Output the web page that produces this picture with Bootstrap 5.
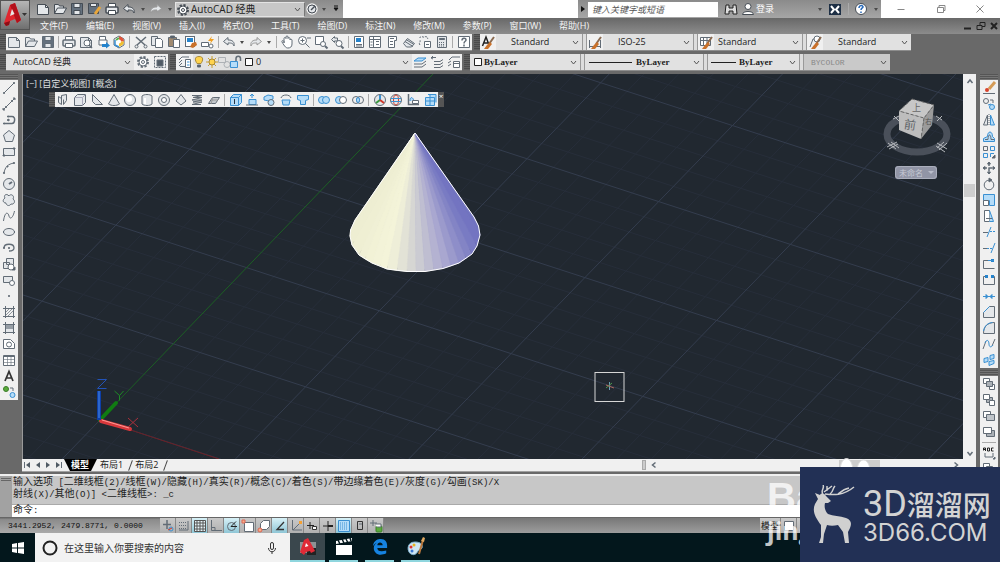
<!DOCTYPE html>
<html lang="zh-CN">
<head>
<meta charset="utf-8">
<meta name="viewport" content="width=device-width, initial-scale=1">
<title>AutoCAD 经典</title>
<link href="https://cdn.jsdelivr.net/npm/bootstrap@5.3.0/dist/css/bootstrap.min.css" rel="stylesheet">
<style>
body{height:100vh;background:#696969;font:9px/12px "Open Sans","Noto Sans CJK SC",sans-serif;color:#222;overflow:hidden}
button,.tbtn{border:0;background:none;padding:0;color:inherit;font:inherit;display:flex;align-items:center;justify-content:center;flex:1 1 0;min-width:0}
.ico{width:16px;height:16px;fill:none;stroke:#626c76;flex:none;display:block}
.ico .s{stroke:#3a90d2}.ico .l{fill:#b5dcf8}.ico .d{fill:#505a64}.ico .w{fill:#fff}
.ico .o{fill:#c9712a;stroke:none}.ico .y{fill:#ffd34d}.ico .g{fill:#5aab3c;stroke:#3c7d2a}.ico .r{stroke:#cf3a2c}
.ico .n{fill:#2583cc;stroke:none}.ico .e{fill:#e4e7ea}
.caret{flex:0 0 10px}.caret::after{content:"";border:2px solid transparent;border-top:3px solid #4a4a4a;margin-top:2px}
.vr-s{width:1px;height:12px;background:#aaa;margin:0 2px;flex:none}
.grip{width:6px;height:16px;flex:none;background:repeating-linear-gradient(#4b4b4b 0 1px,#606060 1px 2px)}
.grip2{width:5px;height:16px;flex:none;border-left:1px solid #999;border-right:1px solid #999;background:#ddd}
select{appearance:none;border:0;border-radius:0;height:16px;padding:0 12px 0 7px;color:#222;font:inherit;outline:0;min-width:0;
 background:#e1e1e1 url("data:image/svg+xml,%3Csvg xmlns='http://www.w3.org/2000/svg' width='7' height='5'%3E%3Cpath d='M1 1l2.5 3L6 1' fill='none' stroke='%23555'/%3E%3C/svg%3E") no-repeat right 3px center}
.strip{background:#f0f0f0;height:17px;border-bottom:1px solid #8d8d8d}
.titlebar{height:18px;background:linear-gradient(#8b8b8b,#a6a6a6)}
.titlebar .ico{stroke:#454c54}
.ws-title{width:130px;height:15px;padding-left:15px;background-color:#c7c7c7;border:1px solid #e3e3e3;border-right-color:#777;font-size:10px}
.logo{width:30px;height:30px;background:linear-gradient(#b5b5b5,#6f6f6f);border:1px solid #555}
.menus{height:16px;background:linear-gradient(#686868,#8c8c8c)}
.menus a{color:#f5f5f5;text-decoration:none}
.search{width:130px;height:15px;border:0;padding:0 4px;font-style:italic;font-size:9px}
.search::placeholder{color:#555}
.serif{font-family:"Liberation Serif",serif;font-weight:700}
.side{width:18px;background:#f0f0f0;flex:none}
.side button{height:16px;flex:0 0 auto;width:100%}
.side-grip{height:6px;background:repeating-linear-gradient(#555 0 1px,#747474 1px 2px);flex:none}
.view{background:#212830;border-left:1px solid #9a9a9a}
.view svg.scene{position:absolute;inset:0;width:100%;height:100%}
.palette{position:absolute;left:26px;top:18px;width:395px;height:15px;background:#f0f0f0}
.palette .x{flex:0 0 6px;background:#555;color:#fff;height:15px;font-size:8px;align-items:flex-start;line-height:7px}
.cube{position:absolute;right:9px;top:18px;width:74px;height:90px}
.vsb{width:13px;background:#f0f0f0;flex:none}
.thumb{background:#cdcdcd}
.tabs{height:13px;background:#f0f0f0;border-bottom:1px solid #a0a0a0}
.tabs .nav-b{width:11px;flex:none;border-right:1px solid #bbb;background:#f5f5f5}
.tabs a{color:#222;text-decoration:none;padding:0 7px 0 6px;position:relative}
.tabs a.on{background:#000;color:#fff;font-weight:700;clip-path:polygon(0 0,100% 0,calc(100% - 6px) 100%,6px 100%);padding:0 8px 0 7px}
.slash{width:1px;height:11px;background:#444;transform:rotate(20deg);flex:none}
.cmd{background:#c7c7c7;border-top:2px solid #efefef}
.cmd-l{width:12px;background:#a2a2a2;flex:none}
.cmd-l i{display:block;margin:2px 1px;height:3px;border:1px solid #666;border-width:1px 0}
.log{font:10px/11px "Liberation Mono","Noto Sans CJK SC",monospace;padding:1px 0 0 1px;height:28px;white-space:pre}
.log small,.entry small{font-size:9px}
.entry{background:#fff;height:13px;font:10px/13px "Liberation Mono","Noto Sans CJK SC",monospace;padding-left:1px;border-top:1px solid #aaa}
.entry input{border:0;outline:0;height:11px;padding:0}
.status{height:16px;background:linear-gradient(#777,#9d9d9d);border-top:1px solid #666}
.coords{width:160px;padding-left:8px;gap:5px;font:8px/14px "Liberation Mono",monospace;color:#111;flex:none;background:linear-gradient(#8a8a8a,#aaa)}
.status button{flex:0 0 16px;height:15px;background:linear-gradient(#c9c9c9,#b0b0b0);border-right:1px solid #888}
.status button.on{background:linear-gradient(#d8f1f7,#8fc6d6)}
.task{height:29px;background:#03171c}
.find{width:255px;background:#f2f2f2;font-size:10px}
.find input{border:0;background:none;outline:0;width:200px;padding:0;height:20px}
.find input::placeholder{color:#333}
.task .app{flex:0 0 29px;height:29px;margin-right:7px;border-bottom:2px solid #8fd6de}
.task .app.on{flex-basis:35px;background:#3a474d;margin-right:4px}
.brand-box{position:absolute;right:0;bottom:0;width:200px;height:95px;background:#223055;color:#d3d3d3;z-index:4}
.brand-deer{left:12px;top:18px;position:absolute}
.brand-a{font:500 28px/30px "Noto Sans CJK SC",sans-serif;white-space:nowrap;height:32px}
.brand-a span{font:36px/30px Roboto,sans-serif}
.brand-b{font:24px/24px Inter,sans-serif}
.ghost{position:absolute;right:180px;bottom:16px;width:53px;height:68px;color:#fff;opacity:.75;font:700 40px/38px "Liberation Sans",sans-serif;z-index:3}
.ghost div+div{font:700 25px/28px "Open Sans",sans-serif}
.paw{position:absolute;right:127px;bottom:90px;z-index:3}
.winb .ico{stroke:#888}
</style>
</head>
<body class="d-flex flex-column">
<header class="d-flex position-relative">
 <button class="logo flex-grow-0 flex-shrink-0" style="flex-basis:30px" aria-label="应用程序菜单"><svg width="28" height="28" viewBox="0 0 28 28"><path d="M3 22L9 4l5-2 6 17-4 3-2-4-5 2-1 4-3 1z" fill="#e0262f"/><path d="M9 4l5-2 6 17-4 3z" fill="#b3101b"/><path d="M9 15l2-7 2.500 5z" fill="#e8e8e8"/><path d="M3 22l2 3 3-1 1-4z" fill="#8d0c15"/><path d="M21 12h5l-2.500 3z" fill="#333"/></svg></button>
 <div class="flex-grow-1" style="min-width:0">
  <div class="d-flex titlebar align-items-center">
   <div class="d-flex align-items-center ps-1" style="width:145px" data-icons="new open save saveas print undo v redo v"></div>
   <div class="position-relative"><select class="ws-title" aria-label="工作空间"><option>AutoCAD 经典</option></select><span class="position-absolute start-0 top-0" data-ico="gear"></span></div>
   <div class="d-flex align-items-center" style="width:38px" data-icons="compass v drop"></div>
   <div class="bg-white flex-grow-1 align-self-stretch"></div>
   <div class="d-flex align-items-center" style="width:10px" data-icons="play"></div>
   <input class="search" placeholder="键入关键字或短语" aria-label="搜索">
   <div class="d-flex align-items-center ps-1" style="width:38px" data-icons="bino user"></div>
   <a href="#" class="text-white text-decoration-none" style="width:59px">登录</a>
   <div class="d-flex align-items-center" style="width:66px" data-icons="v xchg | help v"></div>
   <div class="d-flex bg-white align-self-stretch align-items-center winb" style="width:119px" data-icons="wmin wmax wx"></div>
  </div>
  <nav class="d-flex menus align-items-center">
   <div class="d-flex flex-grow-1" style="gap:18px;padding-left:10px;white-space:nowrap"><a href="#">文件(F)</a><a href="#">编辑(E)</a><a href="#">视图(V)</a><a href="#">插入(I)</a><a href="#">格式(O)</a><a href="#">工具(T)</a><a href="#">绘图(D)</a><a href="#">标注(N)</a><a href="#">修改(M)</a><a href="#">参数(P)</a><a href="#">窗口(W)</a><a href="#">帮助(H)</a></div>
   <div class="d-flex" style="width:38px" data-icons="wmin2 wmax2 wx2"></div>
  </nav>
 </div>
</header>

<div class="d-flex align-items-start">
 <span class="grip"></span>
 <div class="strip d-flex align-items-center" style="width:466px" data-icons="new open save | print preview publish dwf | cut copy paste match block | undo v redo v | hand zoomrt zoomwin zoomprev | props dcenter tools sheet markup calc | helpq"></div>
 <span class="grip" style="margin-left:2px"></span>
 <div class="strip d-flex align-items-center">
  <span class="tbtn" data-ico="tstyle"></span><select style="width:86px;padding-left:15px" aria-label="文字样式"><option>Standard</option></select><span class="grip2"></span>
  <span class="tbtn" data-ico="dstyle"></span><select style="width:90px;padding-left:15px" aria-label="标注样式"><option>ISO-25</option></select><span class="grip2"></span>
  <span class="tbtn" data-ico="tabstyle"></span><select style="width:88px;padding-left:4px" aria-label="表格样式"><option>Standard</option></select><span class="grip2"></span>
  <span class="tbtn" data-ico="mlstyle"></span><select style="width:88px;padding-left:15px" aria-label="多重引线样式"><option>Standard</option></select>
 </div>
</div>
<div class="d-flex align-items-start" style="padding-top:3px">
 <span class="grip"></span>
 <div class="strip d-flex align-items-center" style="width:162px"><select style="flex:1 1 128px" aria-label="工作空间切换"><option>AutoCAD 经典</option></select><div class="d-flex" style="width:34px" data-icons="gear wssave"></div></div>
 <span class="grip" style="margin-left:2px"></span>
 <div class="strip d-flex align-items-center" style="width:286px">
  <div class="d-flex" style="width:17px" data-icons="laymgr"></div>
  <div class="position-relative flex-grow-1"><select class="w-100" style="padding-left:63px" aria-label="图层"><option>0</option></select>
   <div class="position-absolute top-0 start-0 d-flex" style="width:62px" data-icons="bulb sun vpf lock sw"></div></div>
  <div class="d-flex" style="width:50px" data-icons="laycur layprev laystate"></div>
 </div>
 <span class="grip" style="margin-left:2px"></span>
 <div class="d-flex strip">
  <div class="position-relative"><select class="serif" style="width:110px;padding-left:14px" aria-label="颜色"><option>ByLayer</option></select><span class="position-absolute start-0 top-0" data-ico="sw"></span></div><span class="grip2"></span>
  <div class="position-relative"><select class="serif" style="width:118px;padding-left:51px" aria-label="线型"><option>ByLayer</option></select><svg class="position-absolute start-0 top-0" width="50" height="16"><path d="M4 8.500h43" stroke="#222"/></svg></div><span class="grip2"></span>
  <div class="position-relative"><select class="serif" style="width:91px;padding-left:31px" aria-label="线宽"><option>ByLayer</option></select><svg class="position-absolute start-0 top-0" width="30" height="16"><path d="M3 8.500h25" stroke="#222"/></svg></div><span class="grip2"></span>
  <select disabled style="width:86px;font:8px 'Liberation Mono',monospace;background-color:#c9c9c9;color:#888;opacity:1" aria-label="打印样式"><option>BYCOLOR</option></select>
 </div>
</div>

<main class="d-flex flex-grow-1" style="min-height:0;padding-top:3px">
 <div style="flex:0 0 18px;min-height:0;overflow:hidden">
  <div class="side-grip"></div>
  <div class="side d-flex flex-column" data-icons="line xline pline polygon rect arc circle cloud spline ellipse earc insert mkblock point hatch gradient region table mtext addsel"></div>
 </div>
 <div class="d-flex flex-column flex-grow-1" style="margin-left:4px;min-width:0;min-height:0">
  <div class="d-flex flex-grow-1" style="min-height:0">
   <div class="view flex-grow-1 position-relative overflow-hidden">
    <svg class="scene" aria-label="绘图区"><g transform="translate(-23,-74)">
     <g id="grid" fill="none"></g>
     <path d="M100 420L434 73" stroke="#1c5f24"/><path d="M100 420L219 459" stroke="#6b1f25"/>
     <g id="cone"></g>
     <path d="M415 133L355 220 350.600 230 350 236 352 245 359 255 372 263 387 269 407 271.500H425L443 268.500 459 263 472 254 477 246 480 235 478.500 226 474 217Z" fill="none" stroke="#fff"/>
     <path d="M100 420l16-17" stroke="#107c12" stroke-width="4" stroke-linecap="round"/><path d="M101 421l29 8" stroke="#d8383c" stroke-width="4" stroke-linecap="round"/><path d="M102 420l27 8" stroke="#ff9a94"/><path d="M99 420v-29" stroke="#0d3fa8" stroke-width="4"/><path d="M99 418v-27" stroke="#4d8ef0"/>
     <path d="M97.500 379.500h9l-9 9h9" fill="none" stroke="#2253b8"/><path d="M114.500 391l5 4.500 4-4.500M119.500 395.500v5" fill="none" stroke="#1e8a26"/><path d="M128 418l10 9M138 418l-10 9" stroke="#a8303a"/>
     <rect x="595" y="372.500" width="29" height="29" fill="none" stroke="#d6d6d6"/><path d="M609.500 382v8" stroke="#6aa0b8"/><path d="M606 388l6-5" stroke="#4b9a50"/><path d="M606 385l8 3" stroke="#b06a60"/>
    </g></svg>
    <div class="text-white position-relative" style="padding:4px 0 0 3px;opacity:.85">[−] [自定义视图] [概念]</div>
    <div class="palette d-flex align-items-center"><span class="grip h-100"></span><div class="d-flex flex-grow-1 align-items-center" data-icons="psolid box wedge cone sphere cyl torus pyr helix plane | extr press sweep revolve loft | union subtr inter | orbit corbit ucsn views"></div><button class="x" aria-label="关闭">×</button></div>
    <svg class="cube" viewBox="881 92 74 90"><ellipse cx="918" cy="134" rx="30" ry="18" fill="none" stroke="#4a505a" stroke-width="7"/>
     <g stroke="#b6b9bd" stroke-width="1"><path d="M888 147l10-5M890 149l9-5M889 143l8 6M892 142l8 6M938 143l10 6M937 146l9 6M948 143l-8 7M945 142l-7 6M894 119l6-3M895 116l5 5M937 116l6 4M943 116l-5 5"/></g>
     <path d="M913 99l22 6-10 13-25-7z" fill="#c7c7c7"/><path d="M900 111l25 7-3 21-22-9z" fill="#bdbdbd"/><path d="M925 118l10-13-2 20-11 14z" fill="#9b9b9b"/>
     <path d="M913 99l22 6-10 13-25-7zM925 118l-3 21" fill="none" stroke="#666" stroke-dasharray="3 2"/>
     <text x="905" y="129" font-size="12" fill="#606468" transform="rotate(8 911 125)">前</text><text x="913" y="111" font-size="9" fill="#666">上</text><text x="926" y="124" font-size="7" fill="#555">右</text>
     <rect x="896" y="166" width="42" height="13" rx="3" fill="#9195a6"/><rect x="896.500" y="166.500" width="41" height="12" rx="3" fill="none" stroke="#abafbd"/><text x="900" y="176" font-size="8" fill="#c6c9d4">未命名</text><path d="M929 171h6l-3 3z" fill="#b9bdca"/></svg>
   </div>
   <div class="vsb d-flex flex-column align-items-center"><span style="height:16px" data-ico="up"></span><div class="w-100" style="flex:94 0 0"></div><div class="thumb" style="width:11px;height:13px"></div><div style="flex:248 0 0"></div><span style="height:14px" data-ico="down"></span></div>
  </div>
  <div class="tabs d-flex align-items-center">
   <div class="d-flex" style="width:42px" data-icons="first prev next last"></div>
   <a class="on" href="#">模型</a><a href="#" style="padding-left:3px">布局1</a><span class="slash"></span><a href="#" style="padding-left:4px">布局2</a><span class="slash"></span>
   <div class="flex-grow-1"></div>
   <div class="d-flex align-items-center" style="width:334px"><div style="width:4px;height:10px;background:#ccc;border:1px solid #aaa"></div><span data-ico="left"></span><div style="flex:170 0 0"></div><div class="thumb" style="flex:40 0 0;height:11px"></div><div style="flex:65 0 0"></div><span data-ico="right"></span><div style="width:12px"></div></div>
  </div>
 </div>
 <div class="d-flex flex-column" style="flex:0 0 18px;margin:0 2px 0 4px;min-height:0;overflow:hidden">
  <div class="side-grip"></div>
  <div class="side d-flex flex-column" data-icons="erase copyo mirror offset array move rotate scale stretch trim extend brk1 brk2 join chamfer fillet blend explode"></div>
  <div style="height:2px;flex:none"></div><div class="side-grip"></div>
  <div class="side d-flex flex-column align-items-center" data-icons="ord1 ord2 ord3 ord4 - abc ord1"></div>
 </div>
</main>

<section class="cmd d-flex" style="margin-top:2px">
 <div class="cmd-l"><i></i></div>
 <div class="flex-grow-1"><div class="log">输入选项<small> [</small>二维线框<small>(2)/</small>线框<small>(W)/</small>隐藏<small>(H)/</small>真实<small>(R)/</small>概念<small>(C)/</small>着色<small>(S)/</small>带边缘着色<small>(E)/</small>灰度<small>(G)/</small>勾画<small>(SK)/X</small>
射线<small>(X)/</small>其他<small>(O)] &lt;</small>二维线框<small>&gt;: _c</small></div>
 <div class="entry d-flex align-items-center"><label for="ci">命令<small>:</small></label><input id="ci" class="flex-grow-1"></div></div>
</section>
<footer>
 <div class="status d-flex align-items-center">
  <div class="coords d-flex"><span>3441.2952,</span><span>2479.8771,</span><span>0.0000</span></div>
  <div class="d-flex" id="toggles" data-icons="infer snap grid ortho polar osnap osnap3 otrack ducs dyn lwt tpy qp sc"></div>
  <div class="flex-grow-1"></div>
  <div class="d-flex" style="width:240px"><button style="flex-basis:21px">模型</button><div class="d-flex" data-icons="mdl lay"></div></div>
 </div>
 <div class="task d-flex align-items-center">
  <button style="flex:0 0 35px" aria-label="开始"><svg width="12" height="12"><path d="M0 2l5-1v4.500H0zM6 1l6-1v5.500H6zM0 6.500h5V11l-5-1zM6 6.500h6V12l-6-1z" fill="#fff"/></svg></button>
  <label class="find d-flex align-items-center h-100"><svg class="ms-1 me-1" width="21" height="18"><circle cx="11" cy="9" r="6.500" fill="none" stroke="#222" stroke-width="2"/></svg><input placeholder="在这里输入你要搜索的内容"><span data-ico="mic"></span></label>
  <button class="app on" aria-label="AutoCAD"><svg width="20" height="18"><path d="M2 4h16v11H2z" fill="#8e9294"/><path d="M9 10h9v7H9z" fill="#222"/><path d="M2 14L6 2l4-2 7 13-4 2-1-2-4 1-2 3z" fill="#e02a36"/><path d="M7 9l1-4 2.500 3z" fill="#fff"/></svg></button>
  <button class="app" aria-label="电影"><svg width="18" height="18"><path d="M1 7h16v10H1z" fill="#fff"/><path d="M1 3l16-3v3L1 6z" fill="#fff"/><path d="M3 2l2 4M7 1l2 4M11 1l2 4M15 0l1 3" stroke="#03171c" stroke-width="1.500"/></svg></button>
  <button class="app" aria-label="Edge"><svg width="16" height="16" viewBox="0 0 18 18"><path d="M1 8C2 1 7 0 10 0c5 0 7 4 7 7v3H6c0 3 3 5 10 3v3c-8 4-14 0-14-6 0-3 2-5 4-6-3 1-4 3-5 4zM6 7h6c0-4-6-4-6 0z" fill="#1683e0"/></svg></button>
  <button class="app" aria-label="画图"><svg width="20" height="20"><path d="M9 5c6 0 8 3 7 6-1 2-3 1-4 3s-3 5-7 3-5-12 4-12z" fill="#cfe6f4" stroke="#7fb2d0"/><circle cx="5" cy="10" r="1.500" fill="#d33"/><circle cx="8" cy="8" r="1.500" fill="#e6b422"/><circle cx="6" cy="14" r="1.500" fill="#3a76d0"/><path d="M17 3l-4 14" stroke="#b9783c" stroke-width="2"/><path d="M15 4l2-4 2 1-1 4z" fill="#e0a860"/></svg></button>
 </div>
</footer>

<div class="ghost"><div>Ba</div><div>jing</div></div>
<svg class="paw" width="34" height="18"><path d="M1 18C1 0 14 0 14 18M18 18c0-16 13-16 13 0" fill="#fff" stroke="#ddd"/></svg>
<aside class="brand-box">
 <svg class="brand-deer" width="44" height="62" viewBox="0 0 44 62"><path d="M3 8l5 2c1-2 4-2 6 1l5 5-3 2h-3c-1 4 0 8 3 11 5 2 12 2 18 4 5 2 6 5 4 10l-2 4 1 11h-4l-2-11-5-7c-4 1-8 1-11 0l-3 9-1 9H7l2-6V40C3 32 0 26 3 19l3-5z" fill="#d0d0d0"/><path d="M11 9C8 6 13 3 11 0M12 7l8-6M13 9c8 1 18 2 29-7M18 9c4-3 2-5 5-8M26 9c5-4 6-5 11-6M15 6V1" fill="none" stroke="#d0d0d0" stroke-width="1.500"/></svg>
 <div style="padding:22px 0 0 63px"><div class="brand-a"><span>3D</span>溜溜网</div><div class="brand-b">3D66.COM</div></div>
</aside>

<script>
const pg='<path class="e" d="M2.500 3.500h8l3 3v7h-11z"/><path d="M10.500 3.500v3h3"/>';
const brush='<path d="M14 3L9 10" stroke="#8a6a50" stroke-width="2"/><path class="o" d="M10 8l2 2-4 5H4l3-4z"/>';
const P={
new:pg,open:'<path class="e" d="M2.500 12.500v-9h4l1 1.500h4v2M2.500 12.500l3-5.500h9l-3 5.500z"/>',
save:'<path d="M3 2.500h10.500v11h-11v-11z" fill="#65717e"/><path class="e" d="M5 2.500h6v4H5zM5 9.500h6v4H5z"/>',
saveas:'<path d="M2.500 2.500h10v10h-10z" fill="#65717e"/><path class="e" d="M4.500 2.500h6v3h-6z"/><path d="M14 6l-5 7" stroke="#e9a63a" stroke-width="3"/>',
print:'<path class="w" d="M4.500 6V2.500h7V6"/><rect class="e" x="2" y="6" width="12" height="6" rx="1" stroke-width="1.500"/><path class="w" d="M4.500 9.500h7v4h-7z"/>',
undo:'<path d="M13 12c1-4-2-6-5-6H7V3.500L2.500 7.500 7 11V9h1c2 0 4 0 5 3z" class="e"/>',
redo:'<path d="M3 12c-1-4 2-6 5-6h1V3.500l4.500 4L9 11V9H8c-2 0-4 0-5 3z" class="e" stroke="#999"/>',
gear:'<circle cx="8" cy="8" r="5" stroke-width="2" stroke-dasharray="2.200 1.700"/><circle cx="8" cy="8" r="4" class="w"/><circle cx="8" cy="8" r="1.500"/>',
compass:'<circle cx="8" cy="8" r="5" stroke="#eee" stroke-width="1.500"/><circle cx="8" cy="8" r="4" class="e"/><path d="M7 9l4-4" stroke-width="1.500"/>',
drop:'<path d="M6 7h4l-2 2.500zM6 5h4" fill="#111" stroke="#111"/>',play:'<path d="M6 5l4 3-4 3z" fill="#111" stroke="none"/>',
bino:'<path d="M3 4h3v3h4V4h3l1 9h-4v-3H6v3H2z" fill="#ddd" stroke="#222"/>',
user:'<circle cx="8" cy="5.500" r="3" class="w"/><path class="w" d="M2.500 13.500c0-4 11-4 11 0z"/>',
xchg:'<rect x="2" y="3" width="12" height="11" fill="#1d2f45" stroke="none"/><path d="M4 5l3 3.500L4 12M12 5L9 8.500l3 3.500" stroke="#fff" stroke-width="2"/>',
help:'<circle cx="8" cy="8" r="5.500" class="w"/><path d="M6 7c0-3 4-3 4-1 0 1-2 1-2 3M8 10.500v1.500" stroke="#2467b8" stroke-width="1.500"/>',
wmin:'<path d="M4.500 8.500h7" stroke="#888"/>',wmax:'<path d="M4.500 6.500h6v5h-6zM6 6V4.500h6v5h-1" stroke="#888"/>',wx:'<path d="M4.500 4.500l7 7M11.500 4.500l-7 7" stroke="#888"/>',
wmin2:'<path d="M4 10.500h7" stroke="#222" stroke-width="2"/>',wmax2:'<path d="M4 7.500h5v4H4zM7 7V4.500h5v4h-3" stroke="#222"/>',wx2:'<path d="M5 5l6 6M11 5l-6 6" stroke="#222" stroke-width="2"/>',
preview:pg+'<circle class="w" cx="9" cy="9" r="3"/><path d="M11 11l3 3" stroke-width="1.500"/>',
publish:'<path class="w" d="M4.500 6V2.500h6V6M4 6h8v5H4z"/><path class="n" d="M7 10h4V8l4 3.500-4 3V13H7z"/>',
dwf:'<path class="w" d="M3 5l5-3 5 3v6l-5 3-5-3z"/><path d="M8 4a3.500 3.500 0 013.500 3.500" stroke="#e3543a" stroke-width="3"/><path d="M11.500 7.500A3.500 3.500 0 018 11" stroke="#f0c030" stroke-width="3"/><path d="M4 6v5l4 2" class="s" stroke-width="1.500"/><path d="M5 6l3-2" stroke="#59b04c" stroke-width="2"/>',
cut:'<path d="M3 3l9 8M13 3l-9 8" stroke-width="1.500"/><circle cx="3.500" cy="12.500" r="1.500"/><circle cx="12.500" cy="12.500" r="1.500"/>',
copy:'<path class="e" d="M2.500 2.500h6v9h-6z"/><path class="w" d="M6.500 4.500h5l2 2v7h-7z"/>',paste:'<path d="M2.500 3.500h8v9h-8z" fill="#a08a70"/><path class="d" d="M4.500 2h4v2h-4z"/><path class="w" d="M7.500 5.500h6v8h-6z"/>',
match:'<rect x="2.500" y="2.500" width="9" height="10" class="w"/><rect class="n" x="4" y="4" width="6" height="4"/><path class="o" d="M9 9l4-1 1 3-4 3-3-1z"/>',
block:'<path class="w" d="M2.500 8.500h7v4h-7z"/><circle cx="12" cy="12" r="2" class="w"/><path d="M13 2L9 7h3l-1 3 4-5h-3z" fill="#f0a020" stroke="none"/>',
hand:'<path class="w" d="M5 9V4.500c0-1.500 2-1 2 0V3c0-1.500 2-1.500 2 0v1.500c0-1.500 2-1 2 0V6c0-1 2-1 2 0v4c0 3-2 4-4 4s-3-1-6-6c-.5-1.500 1-2 2-.500z"/>',
zoomrt:'<circle class="w" cx="6.500" cy="6.500" r="4"/><path d="M4.500 6.500h4M6.500 4.500v4M9.500 9.500l4 4M11 4h4"/>',
zoomwin:'<path class="w" d="M2.500 2.500h8v8h-8z"/><circle class="w" cx="10" cy="10" r="2.500"/><path d="M12 12l2.500 2.500" stroke-width="2"/>',
zoomprev:'<path class="e" d="M2.500 5.500l3-3V4h3v3h-3v1.500z"/><circle class="w" cx="10" cy="9.500" r="3"/><path d="M12 12l2.500 2.500" stroke-width="2"/>',
props:'<path class="w" d="M3.500 2.500h9v11h-9z"/><path class="n" d="M5 4h5v4H5z"/><path d="M5 10.500h6M5 12h6"/>',
dcenter:'<path class="w" d="M2.500 2.500h11v11h-11z"/><path d="M6.500 2v11M2 5.500h11M9 7.500h3M9 10.500h3M3.500 8h2M3.500 11h2"/>',
tools:'<path class="w" d="M4.500 2.500h8v4h-2v7h-6z"/><path d="M6 4.500h4M6 7.500h3M6 10.500h3"/>',
sheet:'<path class="e" d="M2.500 9.500l4-5 7 5-3 3.500h-5z"/><path d="M4 7.500l8 5M5 5.500l8 5"/>',markup:'<path class="w" d="M7.500 7.500h6v6h-6z"/><path d="M2.500 4c2-3 4 0 5-1s4 0 3 2M3 11c-2-2 1-3 0-5" stroke-dasharray="2 1"/><path d="M9 10.500h3"/>',
calc:'<path class="e" d="M3.500 2.500h9v11h-9z"/><path class="d" d="M5.500 4.500h5v1h-5z"/><path d="M5 8.500h6M5 10.500h6M5 12h6" stroke-dasharray="1 1"/>',
helpq:'<path class="w" d="M2.500 2.500h11v11h-11z"/><path d="M6 6.500c0-3 4-3 4-.500 0 1.500-2 1-2 3.500M8 10.500v2" stroke-width="1.500"/>',
tstyle:'<path d="M2.500 12L6 3l3.500 9M4 9h4" stroke="#222" stroke-width="1.500"/>'+brush,dstyle:'<path d="M2.500 6v8M13.500 6v8M3 12.500h10"/>'+brush,
tabstyle:'<path class="w" d="M2.500 3.500h10v8h-10z"/><path d="M2.500 6.500h10M5.500 4v7M9 4v7"/>'+brush,mlstyle:'<path d="M3 13l3-8h3"/><circle class="w" cx="10" cy="5" r="3"/>'+brush,
wssave:'<path d="M2.500 2.500h11v11h-11z" stroke-dasharray="2 1"/><path class="d" d="M5 6h6v6H5z"/>',
laymgr:'<path class="w" d="M2 6l3-3h7M2 9l3-3M2 12l3-3M3 12.500h5"/><path class="w" d="M8.500 5.500h5v8h-5z"/><path class="s" d="M10 8h2.500M10 11h2.500"/>',
bulb:'<path class="y" d="M8 2.500c5 0 4 4 2 7H6c-2-3-3-7 2-7z" stroke="#a88a3a"/><path class="d" d="M6.500 11h3v2h-3z"/>',
sun:'<path d="M8 2v12M2 8h12M4 4l8 8M12 4l-8 8" stroke="#caa030"/><circle class="y" cx="8" cy="8" r="3" stroke="#a88a3a"/>',
vpf:'<g opacity=".4"><path d="M2.500 3.500h7v5h-7z"/><circle cx="11" cy="10.500" r="3"/></g>',
lock:'<path class="l s" d="M2.500 7.500h7v6h-7z"/><path d="M8 7V4.500c0-3 4.500-3 4.500 0V7" stroke-width="1.500"/>',sw:'<path class="w" stroke="#222" d="M4.500 4.500h7v7h-7z"/>',
laycur:'<path class="l s" d="M2 7l4-3h8l-4 3z"/><path d="M2 10h8l4-3M2 13h8l4-3"/>',layprev:'<path d="M5 7.500h6l3-2M5 10.500h6l3-2M5 13.500h6l3-2M3 3.500h4M2 4l2-2M2 4l2 1"/>',laystate:'<path d="M3 6l3-3h8M2 9l3-2M2 12l3-2"/><path class="w" d="M7.500 7.500h6v6h-6z"/><path d="M8 9.500h5"/>',
line:'<path d="M3 13L13 3"/><path class="d" d="M2.500 12.500h1v1h-1zM12.500 2.500h1v1h-1z"/>',xline:'<path d="M2 14L14 2"/><path class="d" d="M4.500 10.500h1v1h-1zM10.500 4.500h1v1h-1zM2 12v2h2M12 2h2v2"/>',
pline:'<path d="M7 4.500h4c4 0 3 7 0 7H3" stroke-width="1.500"/><path class="d" d="M6.500 4h1v1h-1zM2.500 11h1v1h-1zM6 8l2-1v2z"/>',polygon:'<path class="e" d="M8 2.500l5.500 4.500-2 6.500h-7L2.500 7z"/>',
rect:'<path class="e" d="M2.500 4.500h11v7h-11z"/><path class="d" d="M2 11h2v1H2zM12 4h2v1h-2z"/>',arc:'<path d="M3 13C4 7 7 4 13 3"/><path class="d" d="M2.500 12.500h1v1h-1zM6 6h1v1H6zM12.500 2.500h1v1h-1z"/>',
circle:'<circle class="e" cx="8" cy="8" r="5.500"/><path d="M8 8l3-2" stroke-width="2"/>',cloud:'<path class="e" d="M8 4c2-3 6 0 4 3 3 2 1 6-2 5-2 3-5 1-5-1-3 0-4-3-1-5-2-3 2-5 4-2z"/>',
spline:'<path d="M2.500 13C4 3 7 4 8 8s4 2 5.500-5"/>',ellipse:'<ellipse class="e" cx="8" cy="8" rx="5.500" ry="3.500"/><path d="M2 8h1M13 8h1M8 4v1M8 11v1" stroke-width="2"/>',
earc:'<path d="M3 8c0-5 10-5 10 0 0 2-2 3-5 3" stroke-width="1.300"/><path class="d" d="M2.500 7.500h1v1h-1zM7.500 7.500h1v1h-1z"/>',
insert:'<path class="e" d="M5.500 2.500h7v6h-7zM2.500 6.500h6v6h-6z"/><circle class="w" cx="10" cy="11" r="3"/><path class="d" d="M11 14h3v-3z"/>',mkblock:'<path class="e" d="M2.500 4.500h9v6h-9z"/><circle class="w" cx="11" cy="11" r="2.500"/>',point:'<path class="d" d="M7.500 7.500h1v1h-1z"/>',
hatch:'<path d="M2 4.500h12M2 12.500h12M4.500 2v12M12.500 2v12"/><path d="M5 8l3-3M5 11l6-6M7 12l5-5" stroke-width=".7"/>',gradient:'<path class="e" d="M4.500 4.500h8v8h-8z"/><path d="M5 7h7" stroke-width="4" opacity=".6"/><path d="M2 4.500h12M2 12.500h12M4.500 2v12M12.500 2v12"/>',
region:'<path class="w" d="M2.500 12.500v-9h7l4 4v5z"/><circle cx="8" cy="8.500" r="2.500"/>',table:'<path class="w" d="M2.500 3.500h11v10h-11z"/><path d="M3 4.500h10"/><path d="M3 7.500h10M3 10.500h10M6.500 4v9M10 4v9" opacity=".6"/>',
mtext:'<path d="M4 13L8 3.500 12 13M5.500 10h5" stroke="#333" stroke-width="1.700"/>',addsel:'<circle class="g" cx="5" cy="5" r="2.500"/><circle class="l s" cx="11.500" cy="11" r="2.500"/><path d="M9 4h3v3"/>',
psolid:'<path class="e" d="M3.500 4.500l3 2v6l-3-2zM6.500 7V3.500l5-1v6l-3 4v-5"/>',box:'<path class="e" d="M2.500 5.500l3-3h8v8l-3 3h-8z"/><path d="M2.500 5.500h8l3-3M10.500 5.500v8" stroke="#aab"/>',wedge:'<path class="e" d="M3.500 2.500l10 10h-7l-3-3z"/>',
cone:'<path class="e" d="M8 2.500L2.500 12c3 2 8 2 11 0z"/>',sphere:'<circle class="e" cx="8" cy="8" r="5.500"/><circle cx="7" cy="7" r="3" fill="#fff" stroke="none"/>',cyl:'<path class="e" d="M3 4v8c2 2 8 2 10 0V4c-2-2-8-2-10 0z"/><path d="M6 6v6" stroke="#fff" stroke-width="2"/>',
torus:'<circle class="e" cx="8" cy="8" r="5.500"/><circle class="w" cx="8" cy="8" r="2.500"/>',pyr:'<path class="e" d="M8 2.500L3 9l5 4 5-4z"/>',helix:'<path d="M3 3.500h10l-9 2h9l-10 2.500h10l-9 2h9l-10 2.500h9"/>',plane:'<path d="M2.500 11.500l4-6h7l-4 6z" fill="#c3c8cc"/><path d="M5 8h7M7 5l-2 7" stroke="#999"/>',
extr:'<path class="l s" d="M2.500 5.500l3-3h8v8l-3 3h-8z"/><path class="s" d="M2.500 5.500h8l3-3M10.500 5.500v8"/><path d="M6.500 12V7" stroke="#234"/>',press:'<path class="l s" d="M5 7.500h7v5H5zM8 6V2M6 4l2-2 2 2"/><path d="M2 13h12"/>',
sweep:'<path class="l s" d="M3 5l4-2 5 1v3l-4 2-5-1z"/><circle class="l" cx="10" cy="10.500" r="3"/>',revolve:'<path class="l s" d="M4 8h8l-1 5H5z"/><path d="M3 6c1-4 9-4 10 0"/>',loft:'<path class="l s" d="M2.500 3.500h11v4l-3 1v4h-5v-4l-3-1z"/>',
union:'<circle class="l s" cx="6" cy="8" r="3.500"/><circle class="l s" cx="10" cy="8" r="3.500"/>',subtr:'<circle class="l s" cx="6" cy="8" r="3.500"/><circle class="w" cx="10" cy="8" r="3.500"/>',inter:'<circle cx="6" cy="8" r="3.500"/><circle cx="10" cy="8" r="3.500"/><ellipse class="l s" cx="8" cy="8" rx="1.500" ry="2.500"/>',
orbit:'<circle class="e" cx="8" cy="8" r="5.500"/><path d="M8 8V3" class="s" stroke-width="2"/><path d="M8 8l-4 3" stroke="#3a9a40" stroke-width="2"/><path class="r" d="M8 8l4 3" stroke-width="2"/>',corbit:'<circle class="e" cx="8" cy="8" r="5.500"/><ellipse class="r" cx="8" cy="8" rx="2.500" ry="5"/><path class="s" d="M3 6.500h10M3 9.500h10"/>',
ucsn:'<path class="l s" d="M5 9c0-5 3-4 4 0"/><path d="M3.500 2v10.500H14" stroke-width="1.500"/><path class="w" d="M7.500 8.500h6v3h-6z"/>',views:'<path class="l s" d="M3.500 5.500h9v8h-9zM8 3v11M3 9h10M6 2.500h8v8"/>',
erase:'<path d="M14 2L8 9" stroke="#d59b55" stroke-width="3"/><circle cx="6" cy="10" r="2" fill="#d8432c" stroke="none"/><path d="M2 13.500h12"/>',
copyo:'<circle cx="5" cy="5" r="2.500"/><circle class="l s" cx="11" cy="11" r="2.500"/><path class="l s" d="M7 9l3-1"/><path d="M9 4h3v3"/>',mirror:'<path class="e" d="M6.500 3v10h-4z"/><path class="l s" d="M9.500 3v10h4z"/><path d="M8 2v12" stroke-dasharray="1 1"/>',
offset:'<path class="l s" d="M2.500 13.500v-3l4-2c0-6 5-6 5 0l2 2v3z"/><path d="M4 11.500h3c0-6 3-6 3 0h3"/>',array:'<path d="M2.500 2.500h4v4h-4z"/><path class="s" d="M9.500 2.500h4v4h-4zM2.500 9.500h4v4h-4z"/><path class="s" d="M9.500 13V9.500H13"/><path class="d" d="M11 14h3v-3z"/>',
move:'<path d="M8 2v12M2 8h12" stroke-dasharray="4 1.500" stroke-width="1.500"/><path class="d" d="M8 2L6.500 4h3zM8 14l-1.500-2h3zM2 8l2-1.500v3zM14 8l-2-1.500v3z"/>',rotate:'<circle cx="8" cy="9" r="4.800"/><path class="d" d="M8 2l3 2-3 2z"/>',
scale:'<path class="l s" d="M2.500 2.500h11v11h-5v-5h-6z"/><path class="w" d="M2.500 8.500h5v5h-5z"/>',stretch:'<path class="w" d="M3.500 2.500h5v11h-5z"/><path class="l s" d="M8.500 2.500l4 11h-4"/><path d="M5 10.500h6"/>',
trim:'<path class="s" d="M10 3L6 13"/><path d="M2 8.500h5"/><path class="s" stroke-dasharray="2 1" d="M9 7.500h5"/>',extend:'<path class="s" d="M14 3L10 13"/><path d="M2 8.500h4"/><path class="s" stroke-dasharray="2 1" d="M6 8.500h5"/>',
brk1:'<path d="M9 4.500H2.500v8h11"/><path class="n" d="M10 3h3v3h-3z"/><path class="s" d="M7 4.500h6"/>',brk2:'<path d="M5 4.500H2.500v8h11v-8H11"/><path class="n" d="M4 3h3v3H4zM10 3h3v3h-3z"/>',join:'<path class="s" d="M2 8.500h12M5 6.500l2 2-2 2zM11 6.500l-2 2 2 2z" fill="#2583cc"/>',
chamfer:'<path class="e" d="M2.500 13.500v-5l6-6h5v11z"/><path class="s" d="M2.500 8.500l6-6"/>',fillet:'<path class="e" d="M2.500 13.500c0-7 4-11 11-11v11z"/><path class="s" d="M2.500 11c1-5 4-8 9-8.500"/>',
blend:'<path d="M2 13l3-8M11 10l3-7"/><path class="s" d="M4 7c2-5 4-2 4 1s2 4 4 1"/>',explode:'<path class="l s" d="M3 6.500l4-1v4l-4 1zM9 3.500l4-1v4l-4 1zM8 9.500l5-1v3l-5 2z"/>',
ord1:'<path class="w" d="M2.500 2.500h6v5h-6zM8.500 8.500h5v5h-5z"/><path d="M5.500 5.500h6v5h-6z" fill="#aab0b6"/>',ord2:'<path d="M5.500 5.500h6v5h-6z" fill="#aab0b6"/><path class="w" d="M2.500 2.500h6v5h-6zM8.500 8.500h5v5h-5z"/>',
ord3:'<path class="w" d="M2.500 3.500h7v6h-7z"/><path d="M5.500 6.500h8v6h-8z" fill="#c0c5ca"/>',ord4:'<path d="M5.500 6.500h8v6h-8z" fill="#aab0b6"/><path class="w" d="M2.500 3.500h8v6h-8z"/>',
abc:'<path d="M2.500 5.500V3h2v3M3 4.500h1M6.500 3v3h2V3zM12.500 3h-2v3h2" stroke="#222"/><path d="M4 8v4h8V8"/><path class="d" d="M12 14h2v-2z"/>',
up:'<path d="M5.500 9L8 6l2.500 3" stroke-width="1.500"/>',down:'<path d="M5.500 7L8 10l2.500-3" stroke-width="1.500"/>',left:'<path d="M9.500 5.500L6.500 8l3 2.500" stroke-width="1.500"/>',right:'<path d="M6.500 5.500l3 2.500-3 2.500" stroke-width="1.500"/>',
first:'<path d="M5.500 5v6"/><path class="d" stroke="none" d="M11 5v6L7 8z"/>',prev:'<path class="d" stroke="none" d="M10 5v6L6 8z"/>',next:'<path class="d" stroke="none" d="M6 5v6l4-3z"/>',last:'<path d="M10.500 5v6"/><path class="d" stroke="none" d="M5 5v6l4-3z"/>',
infer:'<path d="M7 2v9M3 6.500h8" stroke-width="1.500"/><circle class="s" cx="11" cy="11" r="2"/><path class="r" d="M8 12l4-2"/>',snap:'<path d="M3 4.500h7M3 7.500h7M3 10.500h7" stroke-dasharray="1 1"/><path d="M12 3v9H3"/>',
grid:'<path d="M2.500 2.500h11v11h-11zM5 2v12M8 2v12M11 2v12M2 5h12M2 8h12M2 11h12" stroke="#555" fill="#e8f4f8"/>',ortho:'<path d="M3.500 2v10.500H14M4 9.500h3v3"/>',polar:'<circle cx="7.500" cy="8.500" r="4"/><path d="M7 8.500h6M7 8.500l5-5" stroke="#222"/>',
osnap:'<path class="w" d="M4.500 4.500h9v9h-9z"/><path d="M2 2h3v3H2z" fill="#f5b08a" stroke="#d65"/>',osnap3:'<path class="w" d="M4.500 5.500l3-3h6v6l-3 3h-6z"/><circle cx="4" cy="12" r="2" fill="#f5b08a" stroke="#d65"/>',
otrack:'<path d="M12 4L5 11.500h7" stroke="#333" stroke-width="1.300"/>',ducs:'<path d="M4.500 2v10H14M5 12l6-6"/><path d="M11 3h3v3h-3z" fill="#f5a030" stroke="none"/>',dyn:'<path d="M6 4v7M3 7.500h7" stroke="#222"/><path class="w" d="M8.500 8.500h4v3h-4z" stroke="#333"/>',
lwt:'<path d="M8 3v10M3 8h5" stroke="#222"/><path d="M8 8h5" stroke="#222" stroke-width="2"/>',tpy:'<path class="l s" d="M2.500 2.500h11v11h-11z"/><path class="s" stroke-dasharray="1 1" d="M4 5h8M4 7h8M4 9h8M4 11h8"/>',qp:'<path d="M5.500 3.500h5v8h-5z" stroke="#333"/><path d="M7 6h3"/>',
sc:'<path d="M5 2v6M2 5h7"/><rect class="g" x="8" y="8" width="6" height="6" rx="1"/><path class="w" d="M7 6h6v3H9"/>',mdl:'<path class="w" d="M3.500 3.500h9v9h-9z"/>',lay:'<path class="w" d="M4.500 2.500h8v11h-8z"/>',
mic:'<rect x="6.500" y="2.500" width="3" height="7" rx="1.500" stroke="#333"/><path d="M4.500 8c0 5 7 5 7 0M8 12v2" stroke="#333"/>'};
const svg=n=>`<svg class="ico" viewBox="0 0 16 16" aria-hidden="true">${P[n]}</svg>`;
document.querySelectorAll('[data-ico]').forEach(e=>e.innerHTML=svg(e.dataset.ico));
document.querySelectorAll('[data-icons]').forEach(e=>e.innerHTML=e.dataset.icons.split(' ').map(n=>
 n=='|'?'<span class="vr-s"></span>':n=='-'?'<span style="height:1px;width:14px;margin:2px 0;background:#aaa"></span>':n=='v'?'<button class="caret" aria-label="更多"></button>':`<button aria-label="${n}">${svg(n)}</button>`).join(''));
[2,4,7,11].forEach(i=>document.querySelectorAll('#toggles button')[i].classList.add('on'));
// ground grid: two families of parallel lines, every fifth one is major; the axes replace the lines through the origin
let minor='',major='';
for(let k=-60;k<30;k++){const y=420-32.5+k*20,s=`M0 ${y}L2000 ${y+650}`;k%5?minor+=s:major+=s}
for(let k=-20;k<90;k++){if(!k)continue;const y=523+k*35.7,s=`M0 ${y}L2000 ${y-2060}`;k%5?minor+=s:major+=s}
document.getElementById('grid').innerHTML=`<path d="${minor}" stroke="#272e3a"/><path d="${major}" stroke="#343d4e"/><path d="M0 523L100 420" stroke="#343d4e"/>`;
// cone facets, lit from the left
const base=[[355,220],[350.6,230],[350,236],[352,245],[359,255],[365,259],[372,263],[380,266],[387,269],[397,270.5],[407,271.5],[416,271.5],[425,271.5],[434,270],[443,268.5],[451,266],[459,263],[466,258.5],[472,254],[477,246],[480,235],[478.5,226],[474,217]];
const stops=[[0,[238,238,210]],[.28,[245,245,218]],[.5,[210,210,210]],[.75,[168,166,208]],[1,[112,114,192]]];
document.getElementById('cone').innerHTML='<path d="M415 133L355 220 350 236 372 263 415 271V133Z" fill="#e6e6d4"/><path d="M415 133L474 217 480 235 459 263 415 271Z" fill="#9c9ac8"/>'+base.slice(1).map((p,i)=>{const q=base[i],t=Math.max(0,Math.min(1,((p[0]+q[0])/2-350)/130));let j=1;while(stops[j][0]<t)j++;
 const [a,c]=stops[j-1],[b,d]=stops[j],f=(t-a)/(b-a),col=`rgb(${c.map((v,n)=>Math.round(v+(d[n]-v)*f))})`;
 return `<path d="M415 133L${q}L${p}Z" fill="${col}" stroke="${col}" stroke-width=".5"/>`}).join('');
</script>
<script src="https://cdn.jsdelivr.net/npm/bootstrap@5.3.0/dist/js/bootstrap.bundle.min.js"></script>
</body>
</html>
